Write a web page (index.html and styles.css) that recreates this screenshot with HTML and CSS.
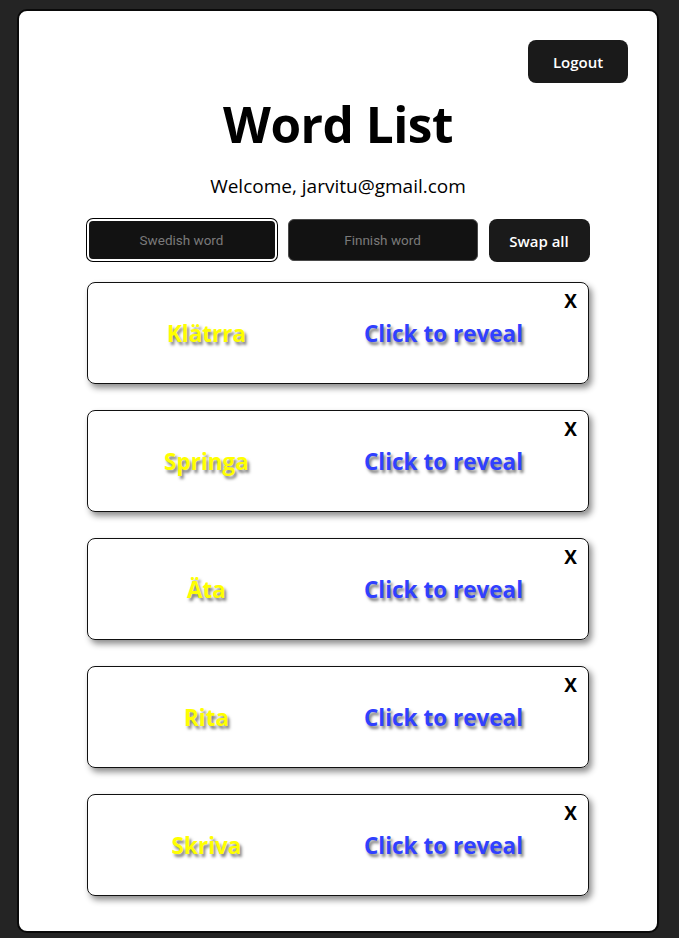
FILE: index.html
```html
<!DOCTYPE html>
<html lang="en">
<head>
<meta charset="utf-8">
<title>Word List</title>
<link rel="stylesheet" href="styles.css">
</head>
<body>
<div class="app">
  <div class="topbar"><button class="btn">Logout</button></div>
  <h1 class="title">Word List</h1>
  <p class="welcome">Welcome, jarvitu@gmail.com</p>
  <div class="form">
    <input class="field focused" type="text" placeholder="Swedish word">
    <input class="field" type="text" placeholder="Finnish word">
    <button class="btn swap">Swap all</button>
  </div>
  <div class="list">
    <div class="card"><span class="close">X</span><span class="sv">Klätrra</span><span class="fi">Click to reveal</span></div>
    <div class="card"><span class="close">X</span><span class="sv">Springa</span><span class="fi">Click to reveal</span></div>
    <div class="card"><span class="close">X</span><span class="sv">Äta</span><span class="fi">Click to reveal</span></div>
    <div class="card"><span class="close">X</span><span class="sv">Rita</span><span class="fi">Click to reveal</span></div>
    <div class="card"><span class="close">X</span><span class="sv">Skriva</span><span class="fi">Click to reveal</span></div>
  </div>
</div>
</body>
</html>
```
FILE: styles.css
```css
* { box-sizing: border-box; }
html, body { height: 100%; }
body {
  margin: 0;
  background: #242424;
  font-family: "Open Sans", "Noto Sans", sans-serif;
  line-height: 1.5;
  color: #000;
  padding: 9px 20px 5px 17px;
}
.app {
  background: #fff;
  border: 2px solid #0a0a0a;
  border-radius: 10px;
  height: 924px;
  padding: 29px 29px 0 29px;
  display: flex;
  flex-direction: column;
  align-items: center;
}
.topbar {
  align-self: stretch;
  display: flex;
  justify-content: flex-end;
}
.btn {
  background: #1a1a1a;
  color: #fff;
  border: 1px solid transparent;
  border-radius: 8px;
  font-family: "Open Sans", sans-serif;
  font-size: 15px;
  font-weight: 600;
  line-height: 24px;
  padding: 8px 19px;
  height: 43px;
  width: 100px;
}
.title {
  margin: 13px 0 0;
  font-size: 49.5px;
  font-weight: 700;
  line-height: 56px;
  letter-spacing: -0.5px;
}
.welcome {
  margin: 21px 0 0;
  font-size: 19px;
  line-height: 26px;
}
.form {
  margin-top: 20px;
  width: 503px;
  display: flex;
  gap: 11px;
}
.field {
  width: 190px;
  height: 42px;
  background: #121212;
  border: 1px solid #4a4a4a;
  border-radius: 6px;
  color: #fff;
  text-align: center;
  font-family: Roboto, sans-serif;
  font-size: 13.5px;
}
.field::placeholder { color: #7a7a7a; }
.field.focused {
  border: 2px solid #fff;
  box-shadow: 0 0 0 1px #000;
  outline: none;
}
.btn.swap { width: 101px; height: 43px; font-size: 15px; }
.list {
  margin-top: 20px;
  width: 502px;
  display: flex;
  flex-direction: column;
  gap: 26px;
}
.card {
  position: relative;
  height: 102px;
  border: 1px solid #111;
  border-radius: 8px;
  box-shadow: 3px 4px 6px rgba(0,0,0,0.45);
  display: grid;
  grid-template-columns: 237px 237px;
  align-items: center;
  justify-items: center;
  padding-top: 2px;
  font-size: 22.5px;
  font-weight: 700;
  text-shadow: 2px 3px 3px rgba(0,0,0,0.5);
}
.sv { color: #ffff00; }
.fi { color: #3040ff; }
.close {
  position: absolute;
  top: 4px;
  right: 11px;
  font-size: 19px;
  font-weight: 700;
  text-shadow: none;
  color: #000;
}
```
